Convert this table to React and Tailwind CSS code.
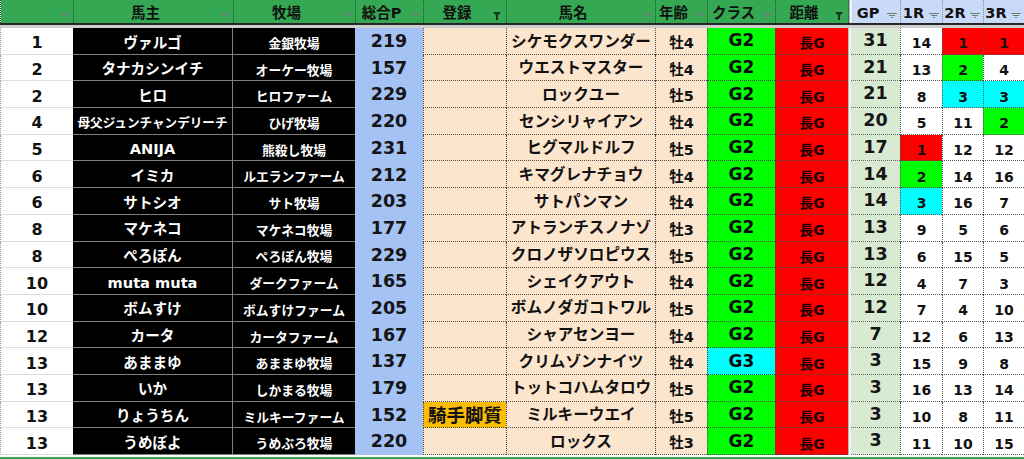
import React from 'react'

const COLS =
  'grid grid-cols-[73px_160px_122px_68px_83px_149px_52px_68px_73px_3px_49px_42px_41px_41px]'

const FONT = '[font-family:"DejaVu_Sans","Noto_Sans_CJK_JP",sans-serif]'

// rank, owner, farm, total, tag, horse, age, class, gp, r1, r2, r3, colours
const rows = [
  [1, 'ヴァルゴ', '金銀牧場', 219, '', 'シケモクスワンダー', '牡4', 'G2', 31, 14, 1, 1, 'wrr'],
  [2, 'タナカシンイチ', 'オーケー牧場', 157, '', 'ウエストマスター', '牡4', 'G2', 21, 13, 2, 4, 'wgw'],
  [2, 'ヒロ', 'ヒロファーム', 229, '', 'ロックユー', '牡5', 'G2', 21, 8, 3, 3, 'wcc'],
  [4, '母父ジュンチャンデリーチ', 'ひげ牧場', 220, '', 'センシリャイアン', '牡4', 'G2', 20, 5, 11, 2, 'wwg'],
  [5, 'ANIJA', '熊殺し牧場', 231, '', 'ヒグマルドルフ', '牡5', 'G2', 17, 1, 12, 12, 'rww'],
  [6, 'イミカ', 'ルエランファーム', 212, '', 'キマグレナチョウ', '牡4', 'G2', 14, 2, 14, 16, 'gww'],
  [6, 'サトシオ', 'サト牧場', 203, '', 'サトパンマン', '牡4', 'G2', 14, 3, 16, 7, 'cww'],
  [8, 'マケネコ', 'マケネコ牧場', 177, '', 'アトランチスノナゾ', '牡3', 'G2', 13, 9, 5, 6, 'www'],
  [8, 'ぺろぽん', 'ぺろぽん牧場', 229, '', 'クロノザソロピウス', '牡5', 'G2', 13, 6, 15, 5, 'www'],
  [10, 'muta muta', 'ダークファーム', 165, '', 'シェイクアウト', '牡4', 'G2', 12, 4, 7, 3, 'www'],
  [10, 'ボムすけ', 'ボムすけファーム', 205, '', 'ボムノダガコトワル', '牡5', 'G2', 12, 7, 4, 10, 'www'],
  [12, 'カータ', 'カータファーム', 167, '', 'シャアセンヨー', '牡4', 'G2', 7, 12, 6, 13, 'www'],
  [13, 'あままゆ', 'あままゆ牧場', 137, '', 'クリムゾンナイツ', '牡4', 'G3', 3, 15, 9, 8, 'www'],
  [13, 'いか', 'しかまる牧場', 179, '', 'トットコハムタロウ', '牡5', 'G2', 3, 16, 13, 14, 'www'],
  [13, 'りょうちん', 'ミルキーファーム', 152, '騎手脚質', 'ミルキーウエイ', '牡5', 'G2', 3, 10, 8, 11, 'www'],
  [13, 'うめぼよ', 'うめぶろ牧場', 220, '', 'ロックス', '牡3', 'G2', 3, 11, 10, 15, 'www'],
]

const rc = (c) =>
  c === 'r' ? 'bg-[#ff0000]' : c === 'g' ? 'bg-[#00ff00]' : c === 'c' ? 'bg-[#00ffff]' : 'bg-white'

const FilterIcon = ({ active }) =>
  active ? (
    <svg width="8" height="8" viewBox="0 0 8 8" className="block">
      <path d="M0 0H8L5 3.6V8H3V3.6Z" fill="#17361f" />
    </svg>
  ) : (
    <svg width="10" height="5" viewBox="0 0 10 5" className="block">
      <path d="M0 0.5H10M2 2.5H8M4 4.5H6" stroke="#6c7f73" strokeWidth="1" />
    </svg>
  )

const Head = ({ label, active, blue }) => (
  <div
    className={`relative flex items-center border-r border-dotted ${
      blue ? 'bg-[#c9daf8] border-[#7d8896]' : 'bg-[#34a853] border-[#1d4d29]'
    }`}
  >
    <span className="flex-1 pr-4 pt-[4px] text-center text-[14.5px] font-bold leading-none text-[#111]">
      {label}
    </span>
    <span className={`absolute ${active ? 'right-[5px] top-[12px]' : 'right-[3px] top-[13px]'}`}>
      <FilterIcon active={active} />
    </span>
  </div>
)

export default function App() {
  return (
    <div className={`w-[1024px] h-[459px] overflow-hidden bg-white ${FONT}`}>
      <div className={`${COLS} h-[23px] [border-left-style:dotted] border-l border-l-[#1d4d29]`}>
        <Head label="" />
        <Head label="馬主" />
        <Head label="牧場" />
        <Head label="総合P" />
        <Head label="登録" active />
        <Head label="馬名" />
        <Head label="年齢" />
        <Head label="クラス" />
        <Head label="距離" active />
        <div className="bg-[#eef0f2] border-l border-[#b9b9b9]" />
        <Head label="GP" blue />
        <Head label="1R" blue />
        <Head label="2R" blue />
        <Head label="3R" blue />
      </div>
      <div className="h-[2px] bg-[#262626]" />
      <div className="h-[3px] bg-[#cfcfcf]" />

      {rows.map((r, i) => {
        const [rank, owner, farm, total, tag, horse, age, cls, gp, r1, r2, r3, col] = r
        return (
          <div key={i} className={`${COLS} h-[26.7px] font-bold leading-none`}>
            <div className="flex items-center justify-center pt-[5px] text-[16px] text-[#111] bg-white border-b border-[#dedede] border-l [border-left-style:dotted] border-l-[#9a9a9a]">
              {rank}
            </div>
            <div
              className={`flex items-center justify-center pt-[4px] bg-black text-white border-b border-r border-[#7f7f7f] whitespace-nowrap ${
                owner.length > 10 ? 'text-[12.6px]' : 'text-[14.6px]'
              }`}
            >
              {owner}
            </div>
            <div className="flex items-center justify-center pt-[7px] bg-black text-white text-[12.8px] border-b border-[#7f7f7f] whitespace-nowrap">
              {farm}
            </div>
            <div className="flex items-center justify-center pt-[1px] bg-[#a4c2f4] text-[17.5px] text-[#151515]">
              {total}
            </div>
            <div
              className={`flex items-center justify-center pt-[3px] border-b border-l border-dotted border-[#4a4a4a] text-[18.5px] text-[#111] whitespace-nowrap ${
                tag ? 'bg-[#fbbc04]' : 'bg-[#fce5cd]'
              }`}
            >
              {tag}
            </div>
            <div className="flex items-center justify-center pt-[3px] bg-[#fce5cd] border-b border-l border-dotted border-[#4a4a4a] text-[15.6px] text-[#111] whitespace-nowrap">
              {horse}
            </div>
            <div className="flex items-center justify-center pt-[5px] bg-[#fce5cd] border-b border-l border-dotted border-[#4a4a4a] text-[14.5px] text-[#111]">
              {age}
            </div>
            <div
              className={`flex items-center justify-center border-b border-l border-dotted border-[#4a4a4a] text-[17px] text-[#0a0a0a] ${
                cls === 'G3' ? 'bg-[#00ffff]' : 'bg-[#00ff00]'
              }`}
            >
              {cls}
            </div>
            <div className="flex items-center justify-center pt-[5px] bg-[#ff0000] border-b border-l border-dotted border-[#4a4a4a] text-[14px] text-[#1a0000]">
              長G
            </div>
            <div className="bg-[#eef0f2] border-l border-[#b9b9b9]" />
            <div className="flex items-center justify-center bg-[#d9ead3] border-b border-dotted border-[#6a6a6a] text-[17.5px] text-[#151515]">
              {gp}
            </div>
            {[r1, r2, r3].map((v, j) => (
              <div
                key={j}
                className={`flex items-center justify-center pt-[5px] border-b border-l border-dotted border-[#555] text-[14px] text-[#111] ${rc(
                  col[j]
                )}`}
              >
                {v}
              </div>
            ))}
          </div>
        )
      })}
      <div className="h-[1.5px] bg-white" />
      <div className="h-[2px] bg-[#34a853]" />
    </div>
  )
}
